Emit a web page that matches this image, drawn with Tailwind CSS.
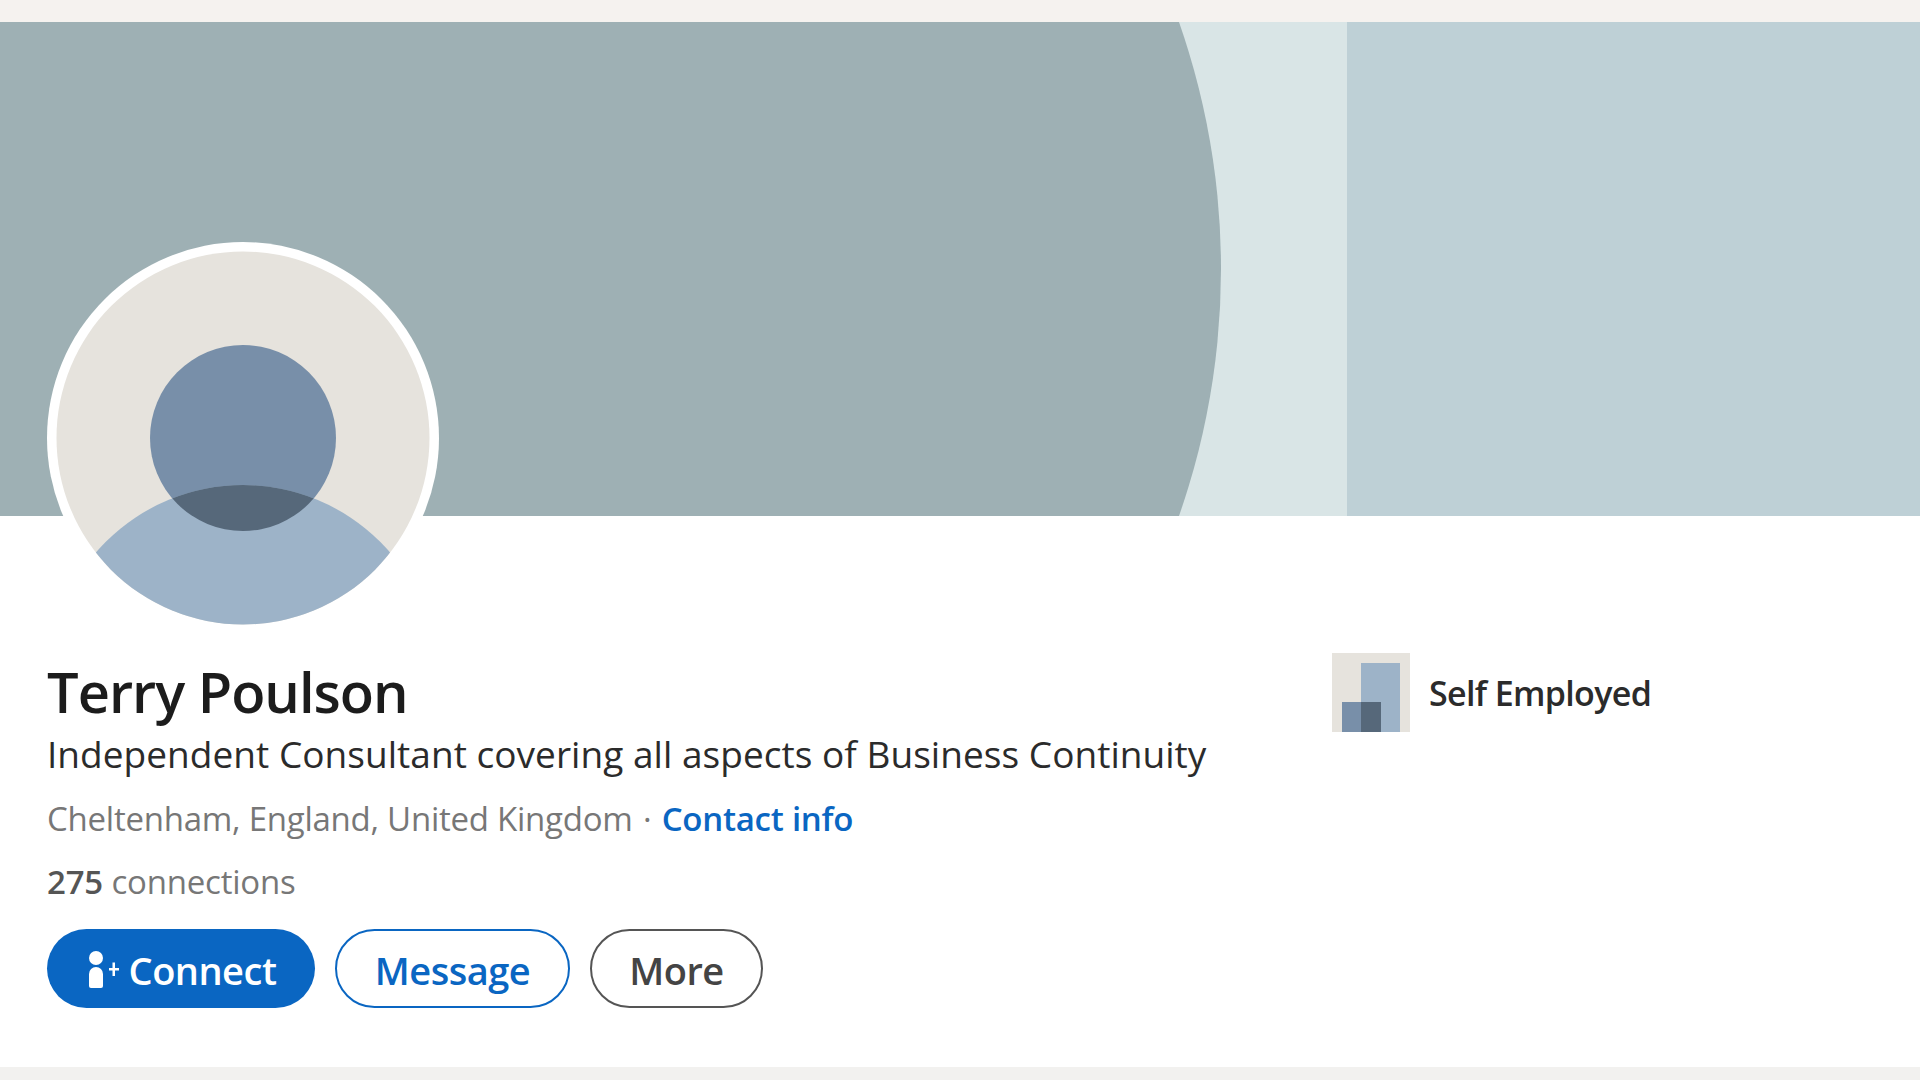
<!DOCTYPE html>
<html lang="en">
<head>
    <meta charset="UTF-8">
    <meta name="viewport" content="width=device-width, initial-scale=1.0">
    <title>Terry Poulson</title>
    <script src="https://cdn.jsdelivr.net/npm/@tailwindcss/browser@4"></script>
</head>
<body class="bg-[#f5f2ef] font-['Open_Sans','Noto_Sans',sans-serif] overflow-hidden">

    <div class="h-[1080px] flex flex-col">
        <div class="h-[22px] shrink-0"></div>

        <div class="bg-white h-[1045px] shrink-0">
            <!-- cover -->
            <svg class="block w-[1920px] h-[494px]" viewBox="0 0 1920 494">
                <rect width="1920" height="494" fill="#bed0d6"/>
                <rect width="1347" height="494" fill="#d9e5e6"/>
                <circle cx="474" cy="247" r="747" fill="#9eb0b4"/>
            </svg>

            <div class="px-[47px]">
                <!-- avatar -->
                <svg class="block w-[392px] h-[392px] -mt-[274px] relative" viewBox="0 0 392 392">
                    <defs>
                        <clipPath id="avatar-clip"><circle cx="196" cy="196" r="186.5"/></clipPath>
                        <clipPath id="head-clip"><circle cx="196" cy="196" r="93"/></clipPath>
                    </defs>
                    <circle cx="196" cy="196" r="196" fill="#ffffff"/>
                    <circle cx="196" cy="196" r="186.5" fill="#e6e3dd"/>
                    <circle cx="196" cy="196" r="93" fill="#788fa9"/>
                    <g clip-path="url(#avatar-clip)">
                        <circle cx="196" cy="437" r="194" fill="#9db3c8"/>
                    </g>
                    <g clip-path="url(#head-clip)">
                        <circle cx="196" cy="437" r="194" fill="#56687a"/>
                    </g>
                </svg>

                <div class="flex mt-[19px]">
                    <div class="w-[1285px] pt-[3px]">
                        <h1 class="text-[56px] leading-[70px] font-semibold text-[#1c1c1c] tracking-[-1px]">Terry Poulson</h1>
                        <p class="text-[37px] leading-[46px] mt-[5px] text-[#2b2b2b] tracking-[0.04px]">Independent Consultant covering all aspects of Business Continuity</p>
                        <p class="text-[33px] leading-[46px] mt-[19px] text-[#777777] tracking-[-0.25px]">Cheltenham, England, United Kingdom <span class="mx-[2px]">·</span> <a href="#" class="text-[#0a66c2] font-semibold">Contact info</a></p>
                        <p class="text-[33px] leading-[46px] mt-[17px] text-[#777777] tracking-[-0.2px]"><span class="text-[#555555] font-semibold">275</span> connections</p>

                        <div class="flex gap-[20px] mt-[24px]">
                            <button class="w-[268px] h-[79px] pt-[3px] rounded-full bg-[#0a66c2] text-white text-[38px] font-semibold tracking-[-0.5px] flex items-center justify-center gap-[10px]">
                                <svg class="w-[33px] h-[38px] -mt-[3px]" viewBox="0 0 33 38" fill="#ffffff">
                                    <circle cx="10" cy="8" r="7"/>
                                    <path d="M3 24a7 7 0 0 1 14 0v12a2 2 0 0 1-2 2H5a2 2 0 0 1-2-2z"/>
                                    <path d="M23 18h3.500v-5.500H29V18h4v2.500h-4V26h-2.500v-5.500H23z"/>
                                </svg>
                                Connect
                            </button>
                            <button class="w-[235px] h-[79px] pt-[3px] rounded-full border-2 border-[#0a66c2] text-[#0a66c2] text-[38px] font-semibold tracking-[-0.5px]">Message</button>
                            <button class="w-[173px] h-[79px] pt-[3px] rounded-full border-2 border-[#555555] text-[#444444] text-[38px] font-semibold tracking-[-0.5px]">More</button>
                        </div>
                    </div>

                    <div class="flex items-start gap-[19px]">
                        <svg class="w-[78px] h-[79px] shrink-0" viewBox="0 0 78 79">
                            <rect width="78" height="79" fill="#e6e3dd"/>
                            <rect x="29" y="10" width="39" height="69" fill="#9db3c8"/>
                            <rect x="10" y="49" width="39" height="30" fill="#788fa9"/>
                            <rect x="29" y="49" width="20" height="30" fill="#56687a"/>
                        </svg>
                        <span class="text-[34px] leading-[81px] font-semibold text-[#2b2b2b] tracking-[-0.65px]">Self Employed</span>
                    </div>
                </div>
            </div>
        </div>

        <div class="flex-1 bg-[#f2f1ef]"></div>
    </div>

</body>
</html>
